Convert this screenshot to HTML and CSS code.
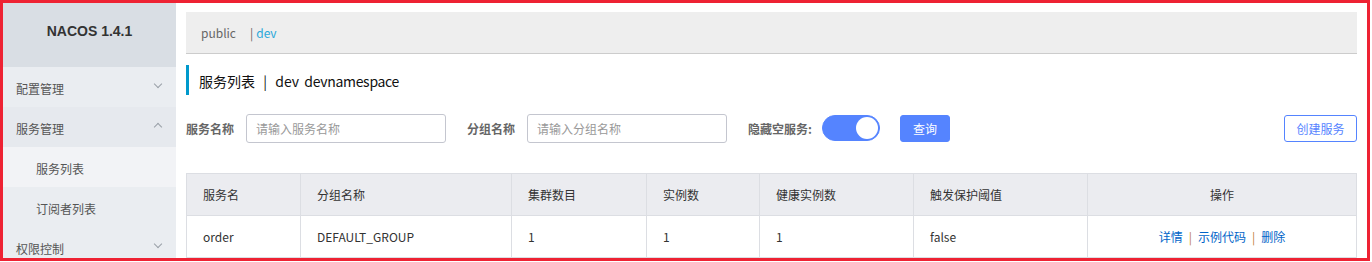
FILE: index.html
```html
<!DOCTYPE html>
<html lang="zh-CN">
<head>
    <meta charset="UTF-8">
    <title>Nacos</title>
    <link rel="stylesheet" href="styles.css">
</head>
<body>
    <div class="frame">
        <aside class="sidebar">
            <div class="logo">NACOS 1.4.1</div>
            <div class="menu-item">配置管理 <span class="arrow down"></span></div>
            <div class="menu-item open">服务管理 <span class="arrow up"></span></div>
            <div class="sub-item active">服务列表</div>
            <div class="sub-item">订阅者列表</div>
            <div class="menu-item">权限控制 <span class="arrow down"></span></div>
        </aside>

        <main class="main">
            <div class="namespace-bar">
                <span class="ns">public</span>
                <span class="sep">|</span>
                <span class="ns current">dev</span>
            </div>

            <h1 class="page-title">服务列表 &nbsp;<span class="title-sep">|</span>&nbsp; dev <span class="ns-name">devnamespace</span></h1>

            <div class="search-row">
                <label class="field-label">服务名称</label>
                <input class="input" placeholder="请输入服务名称">
                <label class="field-label gap">分组名称</label>
                <input class="input" placeholder="请输入分组名称">
                <label class="field-label gap switch-label">隐藏空服务:</label>
                <span class="switch"><span class="knob"></span></span>
                <button class="btn primary">查询</button>
                <button class="btn outline">创建服务</button>
            </div>

            <table class="table">
                <colgroup>
                    <col style="width:114px">
                    <col style="width:211px">
                    <col style="width:135px">
                    <col style="width:113px">
                    <col style="width:154px">
                    <col style="width:174px">
                    <col>
                </colgroup>
                <thead>
                    <tr>
                        <th>服务名</th>
                        <th>分组名称</th>
                        <th>集群数目</th>
                        <th>实例数</th>
                        <th>健康实例数</th>
                        <th>触发保护阈值</th>
                        <th class="center">操作</th>
                    </tr>
                </thead>
                <tbody>
                    <tr>
                        <td>order</td>
                        <td>DEFAULT_GROUP</td>
                        <td>1</td>
                        <td>1</td>
                        <td>1</td>
                        <td>false</td>
                        <td class="center">
                            <a class="link">详情</a><span class="bar">|</span><a class="link">示例代码</a><span class="bar">|</span><a class="link">删除</a>
                        </td>
                    </tr>
                </tbody>
            </table>
        </main>
    </div>
</body>
</html>
```

FILE: styles.css
```css
* {
    margin: 0;
    padding: 0;
    box-sizing: border-box;
}

body {
    background: #ffffff;
    font-family: "Noto Sans CJK SC", "Noto Sans", sans-serif;
    font-size: 12px;
    color: #333;
}

.frame {
    width: 1370px;
    height: 261px;
    border: 3px solid #ee2233;
    display: flex;
    overflow: hidden;
}

/* sidebar */

.sidebar {
    width: 173px;
    flex-shrink: 0;
    background: #eaedf1;
    display: flex;
    flex-direction: column;
}

.logo {
    height: 64px;
    flex-shrink: 0;
    background: #d9dee4;
    display: flex;
    align-items: center;
    justify-content: center;
    padding-bottom: 8px;
    font-family: "Liberation Sans", Arial, sans-serif;
    font-weight: bold;
    font-size: 14px;
    color: #333;
}

.menu-item {
    height: 40px;
    flex-shrink: 0;
    padding: 3px 13px 0 13px;
    display: flex;
    align-items: center;
    justify-content: space-between;
    color: #555;
    font-size: 12px;
}

.menu-item.open {
    background: #e6e9ee;
}

.sub-item {
    height: 40px;
    flex-shrink: 0;
    padding: 3px 0 0 33px;
    display: flex;
    align-items: center;
    color: #555;
}

.sub-item.active {
    background: #f2f3f6;
}

.arrow {
    width: 6px;
    height: 6px;
    border-right: 1px solid #9aa0a8;
    border-bottom: 1px solid #9aa0a8;
    margin-right: 2px;
}

.arrow.down {
    transform: rotate(45deg);
    margin-top: -10px;
}

.arrow.up {
    transform: rotate(-135deg);
    margin-top: -4px;
}

/* main */

.main {
    flex: 1;
    padding: 9px 10px 0 10px;
}

.namespace-bar {
    height: 42px;
    background: #eeeeee;
    border-bottom: 1px solid #cccccc;
    display: flex;
    align-items: center;
    padding-left: 15px;
    font-size: 12px;
    color: #666;
}

.ns.current {
    color: #2ba8da;
}

.sep {
    margin: 0 3px 0 14px;
}

.page-title {
    margin-top: 11px;
    border-left: 3px solid #0099cc;
    height: 30px;
    padding-left: 10px;
    padding-top: 6px;
    font-size: 14px;
    font-weight: normal;
    color: #111;
}

.title-sep {
    margin: 0 2px;
}

.ns-name {
    margin-left: 2px;
    letter-spacing: -0.3px;
}

.search-row {
    margin-top: 18px;
    display: flex;
    align-items: center;
    height: 30px;
}

.field-label {
    font-weight: bold;
    color: #666;
    margin-right: 12px;
}

.field-label.gap {
    margin-left: 21px;
}

.field-label.switch-label {
    margin-right: 10px;
}

.input {
    width: 200px;
    height: 29px;
    border: 1px solid #c4c6cf;
    border-radius: 3px;
    padding: 0 9px;
    font-family: inherit;
    font-size: 12px;
    outline: none;
}

.input::placeholder {
    color: #999;
}

.switch {
    width: 58px;
    height: 26px;
    border-radius: 13px;
    background: #5584ff;
    border: 1px solid #5584ff;
    position: relative;
}

.knob {
    position: absolute;
    right: 1px;
    top: 1px;
    width: 22px;
    height: 22px;
    border-radius: 50%;
    background: #fff;
}

.btn {
    height: 27px;
    border-radius: 3px;
    font-family: inherit;
    font-size: 12px;
    cursor: pointer;
}

.btn.primary {
    margin-left: 20px;
    width: 50px;
    background: #5584ff;
    border: 1px solid #5584ff;
    color: #fff;
}

.btn.outline {
    margin-left: auto;
    width: 73px;
    background: #fff;
    border: 1px solid #5584ff;
    color: #5584ff;
}

/* table */

.table {
    margin-top: 30px;
    width: 100%;
    border-collapse: collapse;
    table-layout: fixed;
}

.table th,
.table td {
    border: 1px solid #dcdee3;
    height: 42px;
    padding: 0 16px;
    text-align: left;
    font-weight: normal;
    color: #333;
    font-size: 12px;
}

.table th {
    background: #ebecf0;
}

.table .center {
    text-align: center;
}

.link {
    color: #0064c8;
}

.bar {
    margin: 0 6px;
    color: #c08040;
}
```
